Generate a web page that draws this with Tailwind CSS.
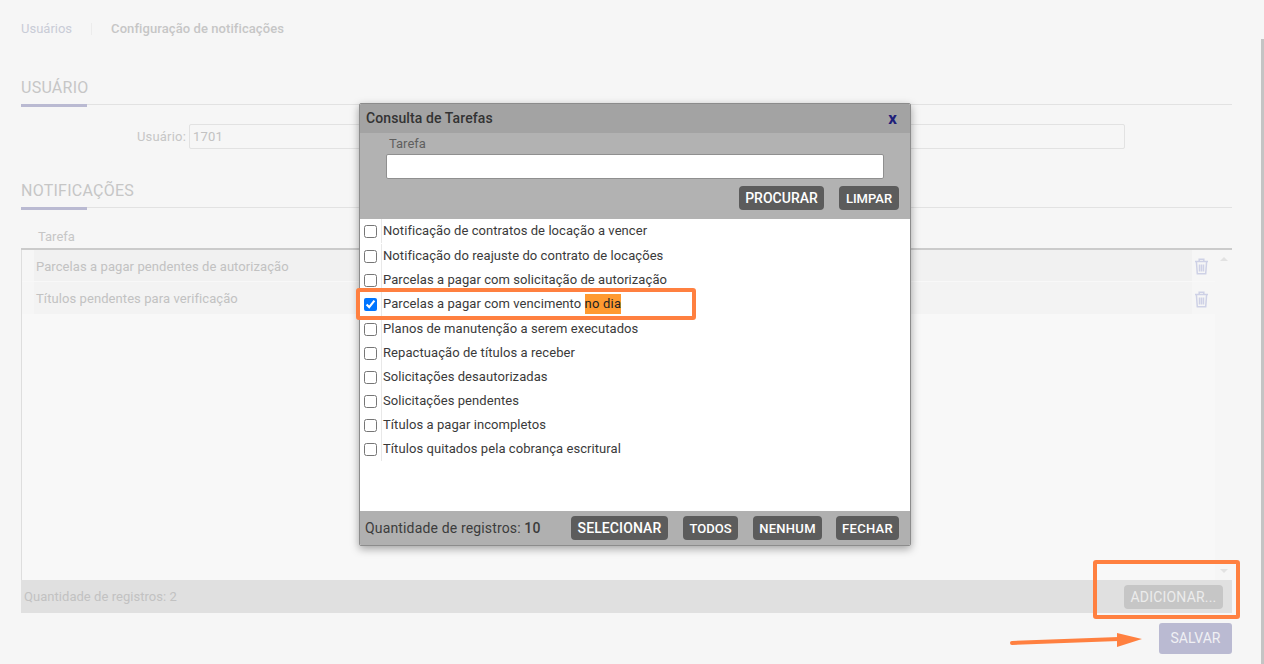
<!DOCTYPE html>
<html lang="pt-BR">
<head>
<meta charset="utf-8">
<title>Configuração de notificações</title>
<script src="https://cdn.jsdelivr.net/npm/@tailwindcss/browser@4"></script>
</head>
<body class="relative h-[664px] w-[1264px] overflow-hidden bg-[#f6f6f6] font-['Roboto',sans-serif] text-[13px] text-[#c2c2c2]">

<!-- Scrollbar -->
<div class="absolute right-0 top-[39px] h-[625px] w-[3px] bg-[#c4c4c4]"></div>

<!-- Page -->
<main class="flex h-full w-[1232px] flex-col pl-[21px] pt-[21px]">
    <nav class="flex h-[15px] items-center text-[13px] leading-[15px]">
        <span class="text-[#c9ccd6]">Usuários</span>
        <span class="mx-[19px] h-[12px] w-px bg-[#ececec]"></span>
        <span class="font-medium tracking-[0.08px] text-[#c6c6c6]">Configuração de notificações</span>
    </nav>

    <section class="mt-[42px]">
        <h2 class="h-[26px] text-[16px] leading-[19px] tracking-[0.25px] text-[#c6c6c6]">USUÁRIO</h2>
        <div class="h-px bg-[#e2e2e2]"><div class="h-[3px] w-[66px] bg-[#babad2]"></div></div>
    </section>

    <div class="mt-[19px] flex h-[25px] items-center pl-[115px]">
        <label class="w-[50px] text-right text-[13px] tracking-[0.2px] text-[#c6c6c6]">Usuário:</label>
        <div class="ml-[3px] flex h-[25px] w-[936px] items-center rounded-[2px] border border-[#e2e2e2] px-[3px] text-[13px] tracking-[0.2px] text-[#c2c2c2]">1701</div>
    </div>

    <section class="mt-[32px]">
        <h2 class="h-[26px] text-[16px] leading-[19px] tracking-[0.25px] text-[#c6c6c6]">NOTIFICAÇÕES</h2>
        <div class="h-px bg-[#e2e2e2]"><div class="h-[3px] w-[66px] bg-[#babad2]"></div></div>
    </section>

    <div class="mt-[19px] flex h-[21px] items-center pb-[1px] pl-[17px] text-[13px] text-[#c6c6c6]">Tarefa</div>
    <div class="h-[2px] bg-[#cbcbcb]"></div>

    <!-- Task table -->
    <div class="flex h-[330px] border-l border-[#dedede]">
        <div class="flex-1 bg-[#f8f8f8]">
            <div class="flex h-[31px] bg-[#f1f1f1]">
                <div class="w-[12px] bg-[#f6f6f6]"></div>
                <div class="flex flex-1 items-center pl-[2px] pt-[2px] text-[13px] tracking-[0.08px] text-[#c2c2c2]">Parcelas a pagar pendentes de autorização</div>
                <div class="flex w-[23px] items-center bg-[#f6f6f6] pl-[2px] pt-[2px]">
                    <svg class="h-[17px] w-[15px]" viewBox="0 0 15 17" fill="none" stroke="#ced1e6" stroke-width="1.5"><path d="M1 3.5h13M5.2 3.3V1.3h4.6v2M2.4 3.8l.9 12h8.4l.9-12M5.5 6.5v7M7.5 6.5v7M9.5 6.5v7"/></svg>
                </div>
            </div>
            <div class="mt-px flex h-[32px] bg-[#f3f3f3]">
                <div class="w-[12px] bg-[#f6f6f6]"></div>
                <div class="flex flex-1 items-center pl-[2px] pt-[2px] text-[13px] tracking-[0.08px] text-[#c2c2c2]">Títulos pendentes para verificação</div>
                <div class="flex w-[23px] items-center bg-[#f6f6f6] pl-[2px] pt-[2px]">
                    <svg class="h-[17px] w-[15px]" viewBox="0 0 15 17" fill="none" stroke="#ced1e6" stroke-width="1.5"><path d="M1 3.5h13M5.2 3.3V1.3h4.6v2M2.4 3.8l.9 12h8.4l.9-12M5.5 6.5v7M7.5 6.5v7M9.5 6.5v7"/></svg>
                </div>
            </div>
        </div>
        <div class="flex w-[17px] flex-col items-center justify-between bg-[#f6f6f6] pb-[7px] pt-[7px]">
            <div class="h-0 w-0 border-x-[4px] border-b-[4px] border-x-transparent border-b-[#e2e2e2]"></div>
            <div class="h-0 w-0 border-x-[4px] border-t-[4px] border-x-transparent border-t-[#e2e2e2]"></div>
        </div>
    </div>

    <footer class="flex h-[33px] items-center justify-between bg-[#e0e0e0] pl-[3px] pr-[9px]">
        <span class="text-[13px] tracking-[0.04px] text-[#c2c2c2]">Quantidade de registros: 2</span>
        <button class="h-[24px] w-[99px] rounded-[4px] bg-[#c6c6c6] pt-px text-[14px] tracking-[0.2px] text-[#ececec]">ADICIONAR...</button>
    </footer>

    <div class="mt-[10px] flex justify-end">
        <button class="h-[31px] w-[73px] rounded-[3px] bg-[#babad2] text-[14px] text-[#f0f0f4]">SALVAR</button>
    </div>
</main>

<!-- Modal: Consulta de Tarefas -->
<div class="absolute left-[359px] top-[103px] flex h-[443px] w-[552px] flex-col overflow-hidden rounded-[2px] border border-[#8c8c8c] bg-white shadow-[0_3px_8px_rgba(0,0,0,0.35)]">
    <div class="flex h-[29px] shrink-0 items-center justify-between bg-[#a3a3a3] pl-[6px] pr-[13px]">
        <span class="text-[14px] font-medium tracking-[0.1px] text-[#333]">Consulta de Tarefas</span>
        <span class="text-[17px] font-bold leading-none text-[#1f1f7a]">x</span>
    </div>
    <div class="h-[86px] shrink-0 bg-[#b2b2b2] pl-[26px] pr-[11px]">
        <div class="h-[21px] pl-[3px] pt-[3px] text-[13px] leading-[15px] text-[#5f5f5f]">Tarefa</div>
        <div class="h-[25px] w-[498px] rounded-[2px] border border-[#8f8f8f] bg-white"></div>
        <div class="mt-[7px] flex justify-end gap-[15px]">
            <button class="h-[24px] w-[85px] rounded-[4px] bg-[#5c5c5c] pt-px text-[14px] font-medium text-white">PROCURAR</button>
            <button class="h-[24px] w-[60px] rounded-[4px] bg-[#5c5c5c] pt-px text-[13px] font-medium text-white">LIMPAR</button>
        </div>
    </div>

    <div class="h-[292px] shrink-0 bg-white pl-[4px] text-[13px] tracking-[0.07px] text-[#3a3a3a]">
        <label class="flex h-6 items-center"><input type="checkbox" class="h-[13px] w-[13px] accent-[#0075ff]"><span class="ml-[4px] flex h-full items-center border-l border-[#e8e8e8] pl-[1px]">Notificação de contratos de locação a vencer</span></label>
        <label class="mt-px flex h-6 items-center"><input type="checkbox" class="h-[13px] w-[13px] accent-[#0075ff]"><span class="ml-[4px] flex h-full items-center border-l border-[#e8e8e8] pl-[1px]">Notificação do reajuste do contrato de locações</span></label>
        <label class="flex h-6 items-center"><input type="checkbox" class="h-[13px] w-[13px] accent-[#0075ff]"><span class="ml-[4px] flex h-full items-center border-l border-[#e8e8e8] pl-[1px]">Parcelas a pagar com solicitação de autorização</span></label>
        <label class="flex h-6 items-center"><input type="checkbox" checked class="h-[13px] w-[13px] accent-[#0075ff]"><span class="ml-[4px] flex h-full items-center border-l border-[#e8e8e8] pl-[1px]">Parcelas a pagar com vencimento&nbsp;<mark class="bg-[#ff9a30] tracking-[0.2px] text-[#222]">no dia</mark></span></label>
        <label class="mt-px flex h-6 items-center"><input type="checkbox" class="h-[13px] w-[13px] accent-[#0075ff]"><span class="ml-[4px] flex h-full items-center border-l border-[#e8e8e8] pl-[1px]">Planos de manutenção a serem executados</span></label>
        <label class="flex h-6 items-center"><input type="checkbox" class="h-[13px] w-[13px] accent-[#0075ff]"><span class="ml-[4px] flex h-full items-center border-l border-[#e8e8e8] pl-[1px]">Repactuação de títulos a receber</span></label>
        <label class="flex h-6 items-center"><input type="checkbox" class="h-[13px] w-[13px] accent-[#0075ff]"><span class="ml-[4px] flex h-full items-center border-l border-[#e8e8e8] pl-[1px]">Solicitações desautorizadas</span></label>
        <label class="flex h-6 items-center"><input type="checkbox" class="h-[13px] w-[13px] accent-[#0075ff]"><span class="ml-[4px] flex h-full items-center border-l border-[#e8e8e8] pl-[1px]">Solicitações pendentes</span></label>
        <label class="flex h-6 items-center"><input type="checkbox" class="h-[13px] w-[13px] accent-[#0075ff]"><span class="ml-[4px] flex h-full items-center border-l border-[#e8e8e8] pl-[1px]">Títulos a pagar incompletos</span></label>
        <label class="flex h-6 items-center"><input type="checkbox" class="h-[13px] w-[13px] accent-[#0075ff]"><span class="ml-[4px] flex h-full items-center border-l border-[#e8e8e8] pl-[1px]">Títulos quitados pela cobrança escritural</span></label>
    </div>

    <div class="flex flex-1 items-center justify-between bg-[#b0b0b0] pl-[5px] pr-[11px]">
        <span class="pt-px text-[14px] tracking-[0.15px] text-[#3c3c3c]">Quantidade de registros: <span class="font-medium">10</span></span>
        <div class="flex gap-[15px]">
            <button class="h-[24px] w-[97px] rounded-[4px] bg-[#5c5c5c] pt-px text-[14px] font-medium tracking-[0.1px] text-white">SELECIONAR</button>
            <button class="h-[24px] w-[55px] rounded-[4px] bg-[#5c5c5c] pt-px text-[13px] font-medium text-white">TODOS</button>
            <button class="h-[24px] w-[69px] rounded-[4px] bg-[#5c5c5c] pt-px text-[13px] font-medium tracking-[0.3px] text-white">NENHUM</button>
            <button class="-ml-px h-[24px] w-[63px] rounded-[4px] bg-[#5c5c5c] pt-px text-[13px] font-medium tracking-[0.3px] text-white">FECHAR</button>
        </div>
    </div>
</div>

<!-- Annotations -->
<div class="absolute left-[356px] top-[288px] h-[32px] w-[340px] rounded-[3px] border-[4px] border-[#ff8040]"></div>
<div class="absolute left-[1093px] top-[560px] h-[59px] w-[147px] rounded-[3px] border-[4px] border-[#ff8040]"></div>
<svg class="absolute left-[1005px] top-[628px] h-[24px] w-[145px]" viewBox="0 0 145 24" fill="none">
    <path d="M7 15 L114 11" stroke="#ff8040" stroke-width="4" stroke-linecap="round"/>
    <path d="M112 5 L137 11 L112 19 Z" fill="#ff8040"/>
</svg>
</body>
</html>
